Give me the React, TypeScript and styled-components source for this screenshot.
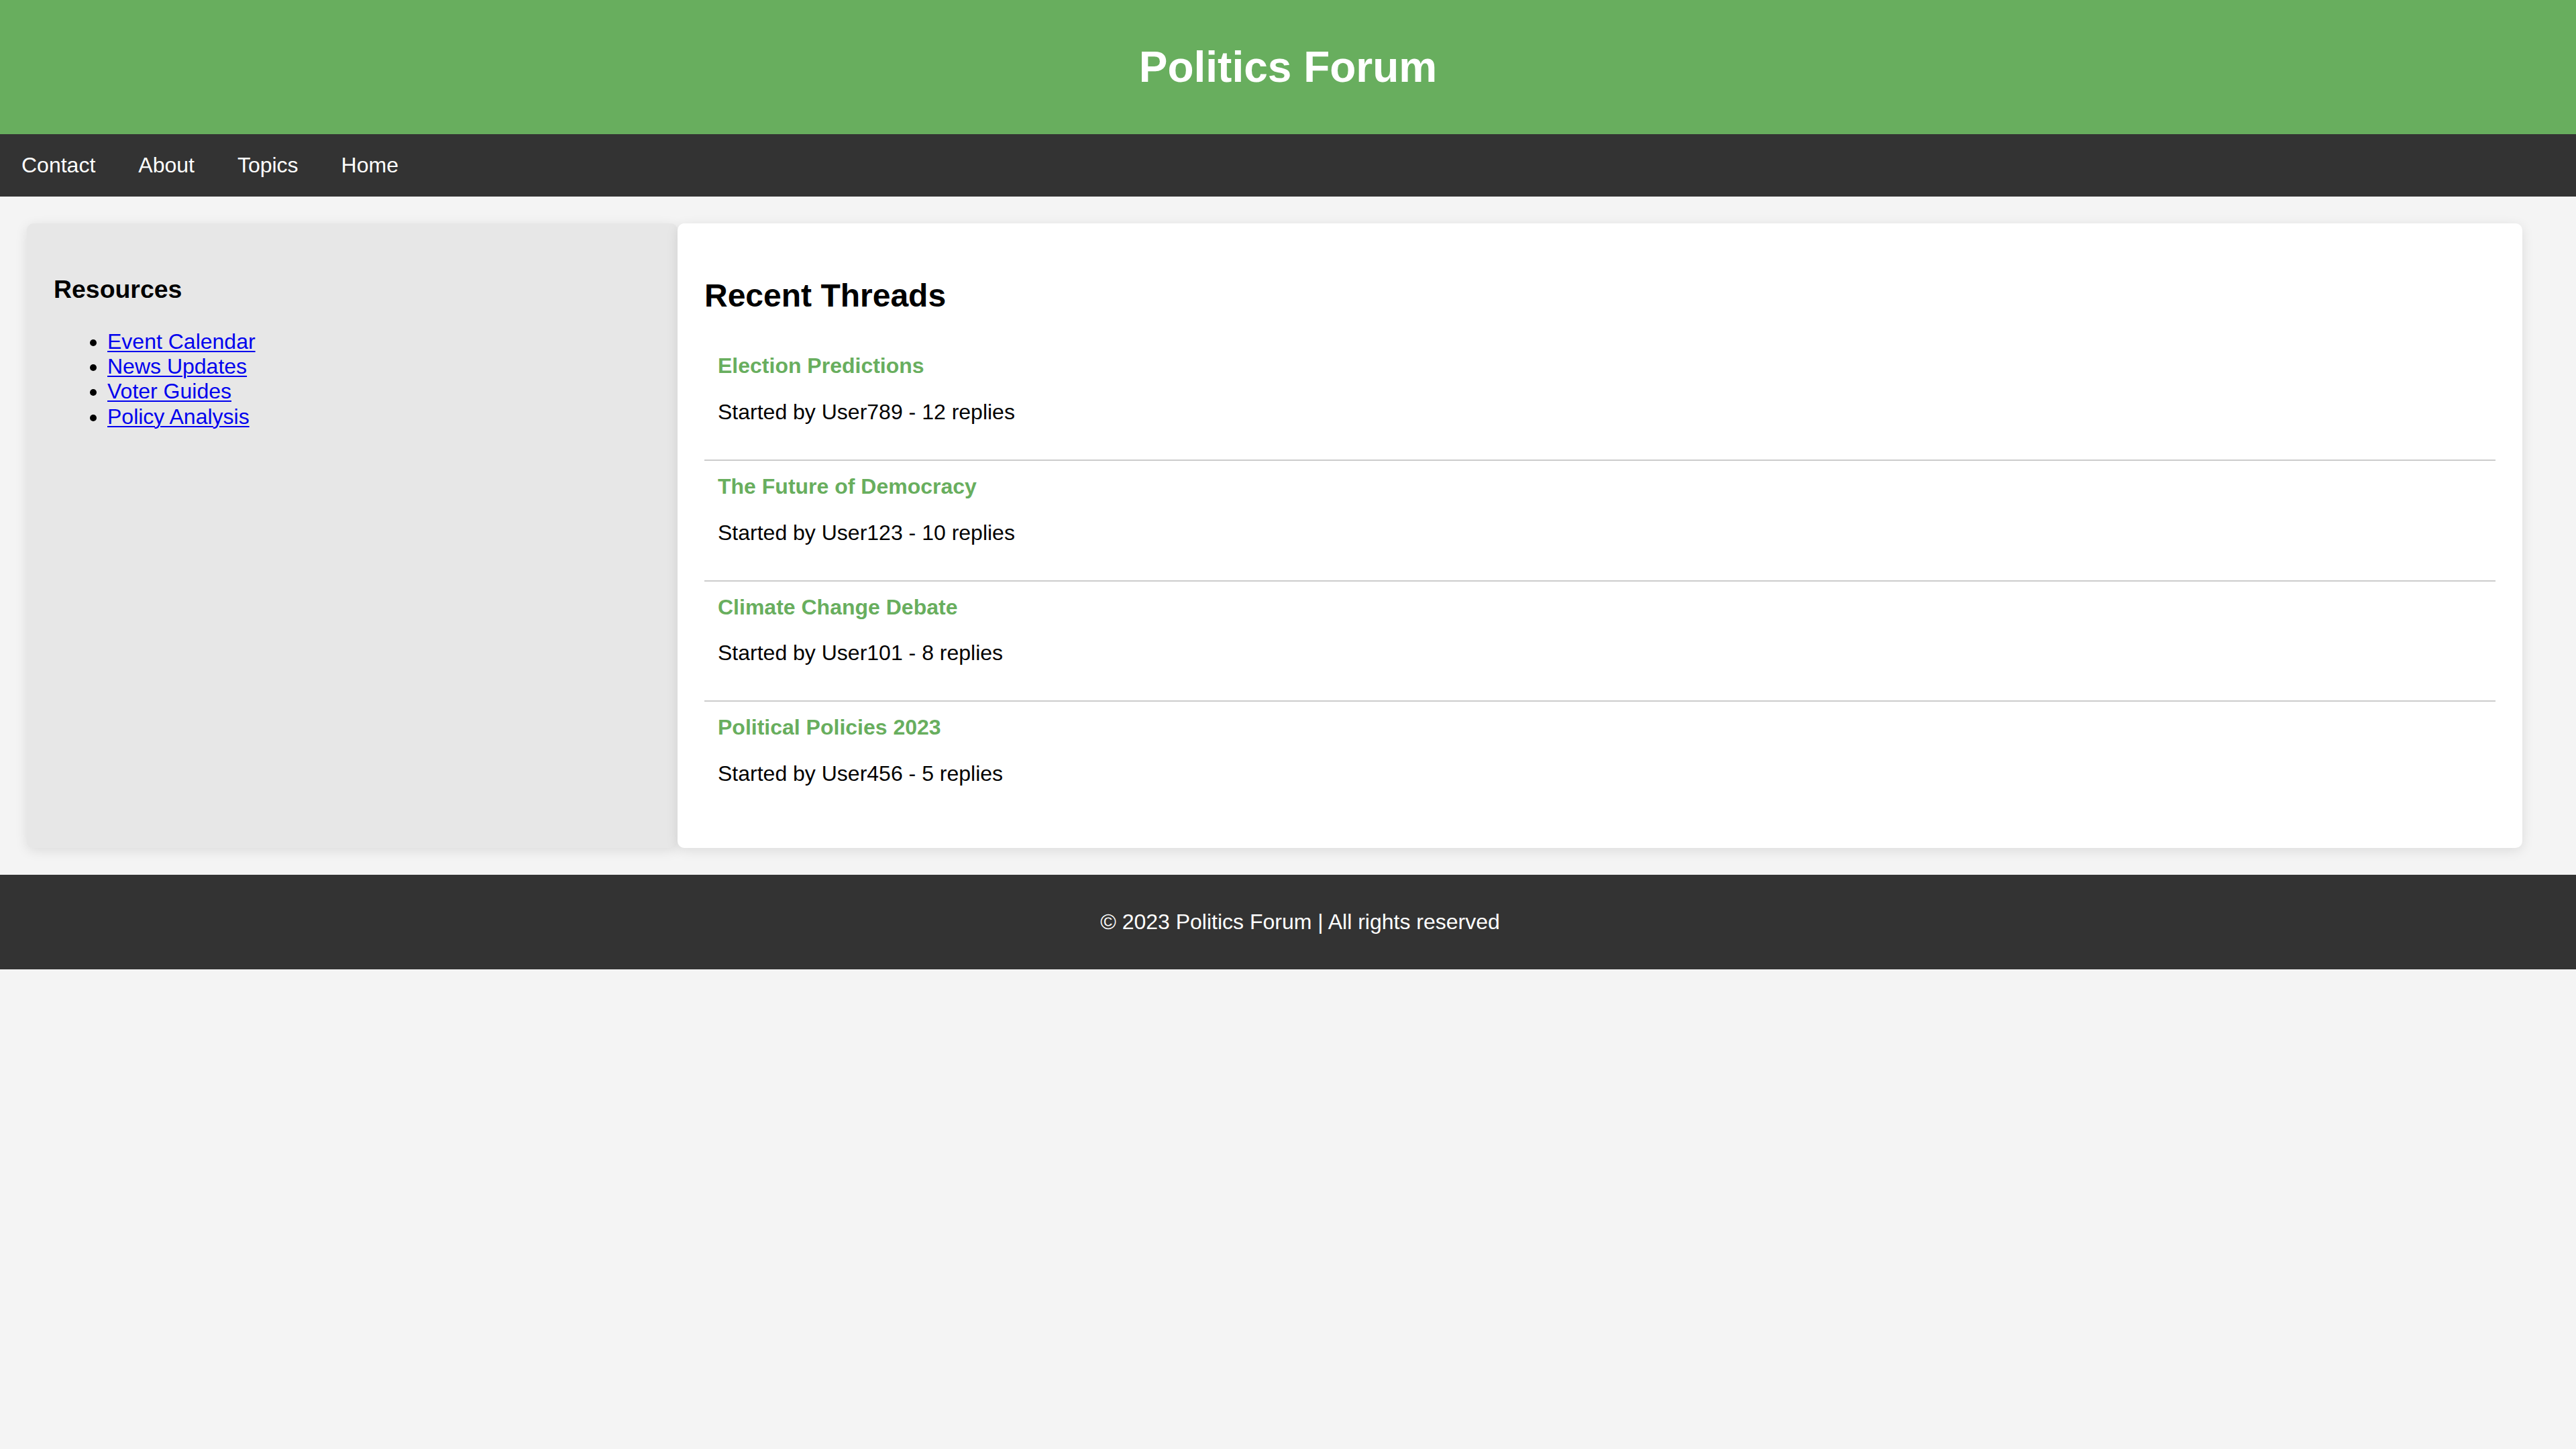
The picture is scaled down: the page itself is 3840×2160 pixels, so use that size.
import React from "react";
import styled, { createGlobalStyle } from "styled-components";

const GlobalStyle = createGlobalStyle`
  html, body {
    margin: 0;
    padding: 0;
    background: #f4f4f4;
    font-family: "Liberation Sans", Arial, Helvetica, sans-serif;
    font-size: 32px;
    color: #000;
  }
  * { box-sizing: content-box; }
`;

const Header = styled.header`
  background: #68ae5e;
  color: #fff;
  text-align: center;
  padding: 40px 0;
  height: 120px;
  display: flex;
  align-items: center;
  justify-content: center;
`;

const Title = styled.h1`
  margin: 0;
  font-size: 64px;
  font-weight: bold;
  line-height: 74px;
`;

const Nav = styled.nav`
  background: #333;
  display: flex;
`;

const NavLink = styled.a`
  color: #fff;
  text-decoration: none;
  padding: 28px 32px;
  font-size: 32px;
  line-height: 36.8px;
`;

const Container = styled.div`
  display: flex;
  align-items: stretch;
  padding: 40px 80px 40px 40px;
`;

const Card = styled.div<{ $grow: number; $bg: string }>`
  flex: ${(p) => p.$grow};
  background: ${(p) => p.$bg};
  padding: 40px;
  border-radius: 10px;
  box-shadow: 0 4px 18px rgba(0, 0, 0, 0.1);
  min-width: 0;
`;

const SideTitle = styled.h3`
  font-size: 37.44px;
  margin: 37.44px 0;
  line-height: 43px;
`;

const ResourceList = styled.ul`
  margin: 32px 0;
  padding-left: 80px;
  line-height: 37.3px;
`;

const ResourceLink = styled.a`
  color: #0000ee;
  text-decoration: underline;
  text-decoration-thickness: 2px;
  text-underline-offset: 3px;
`;

const MainTitle = styled.h2`
  font-size: 48px;
  margin: 39.84px 0;
  line-height: 55px;
`;

const Thread = styled.div`
  padding: 20px;
  border-bottom: 2px solid #cccccc;
  &:last-child {
    border-bottom: none;
  }
`;

const ThreadTitle = styled.h3`
  margin: 0 0 32px;
  font-size: 32px;
  line-height: 36.8px;
  color: #68ae5e;
  font-weight: bold;
`;

const ThreadMeta = styled.p`
  margin: 32px 0;
  font-size: 32px;
  line-height: 36.8px;
`;

const Footer = styled.footer`
  background: #333;
  color: #fff;
  text-align: center;
  padding: 20px 20px 20px 56px;
`;

const FooterText = styled.p`
  margin: 32px 0;
  font-size: 32px;
  line-height: 36.8px;
`;

const navItems = ["Contact", "About", "Topics", "Home"];
const resources = ["Event Calendar", "News Updates", "Voter Guides", "Policy Analysis"];
const threads = [
  { title: "Election Predictions", meta: "Started by User789 - 12 replies" },
  { title: "The Future of Democracy", meta: "Started by User123 - 10 replies" },
  { title: "Climate Change Debate", meta: "Started by User101 - 8 replies" },
  { title: "Political Policies 2023", meta: "Started by User456 - 5 replies" },
];

export default function App() {
  return (
    <>
      <GlobalStyle />
      <Header>
        <Title>Politics Forum</Title>
      </Header>
      <Nav>
        {navItems.map((n) => (
          <NavLink key={n} href="#">
            {n}
          </NavLink>
        ))}
      </Nav>
      <Container>
        <Card $grow={1} $bg="#e7e7e7">
          <SideTitle>Resources</SideTitle>
          <ResourceList>
            {resources.map((r) => (
              <li key={r}>
                <ResourceLink href="#">{r}</ResourceLink>
              </li>
            ))}
          </ResourceList>
        </Card>
        <Card $grow={3} $bg="#ffffff">
          <MainTitle>Recent Threads</MainTitle>
          {threads.map((t) => (
            <Thread key={t.title}>
              <ThreadTitle>{t.title}</ThreadTitle>
              <ThreadMeta>{t.meta}</ThreadMeta>
            </Thread>
          ))}
        </Card>
      </Container>
      <Footer>
        <FooterText>© 2023 Politics Forum | All rights reserved</FooterText>
      </Footer>
    </>
  );
}
